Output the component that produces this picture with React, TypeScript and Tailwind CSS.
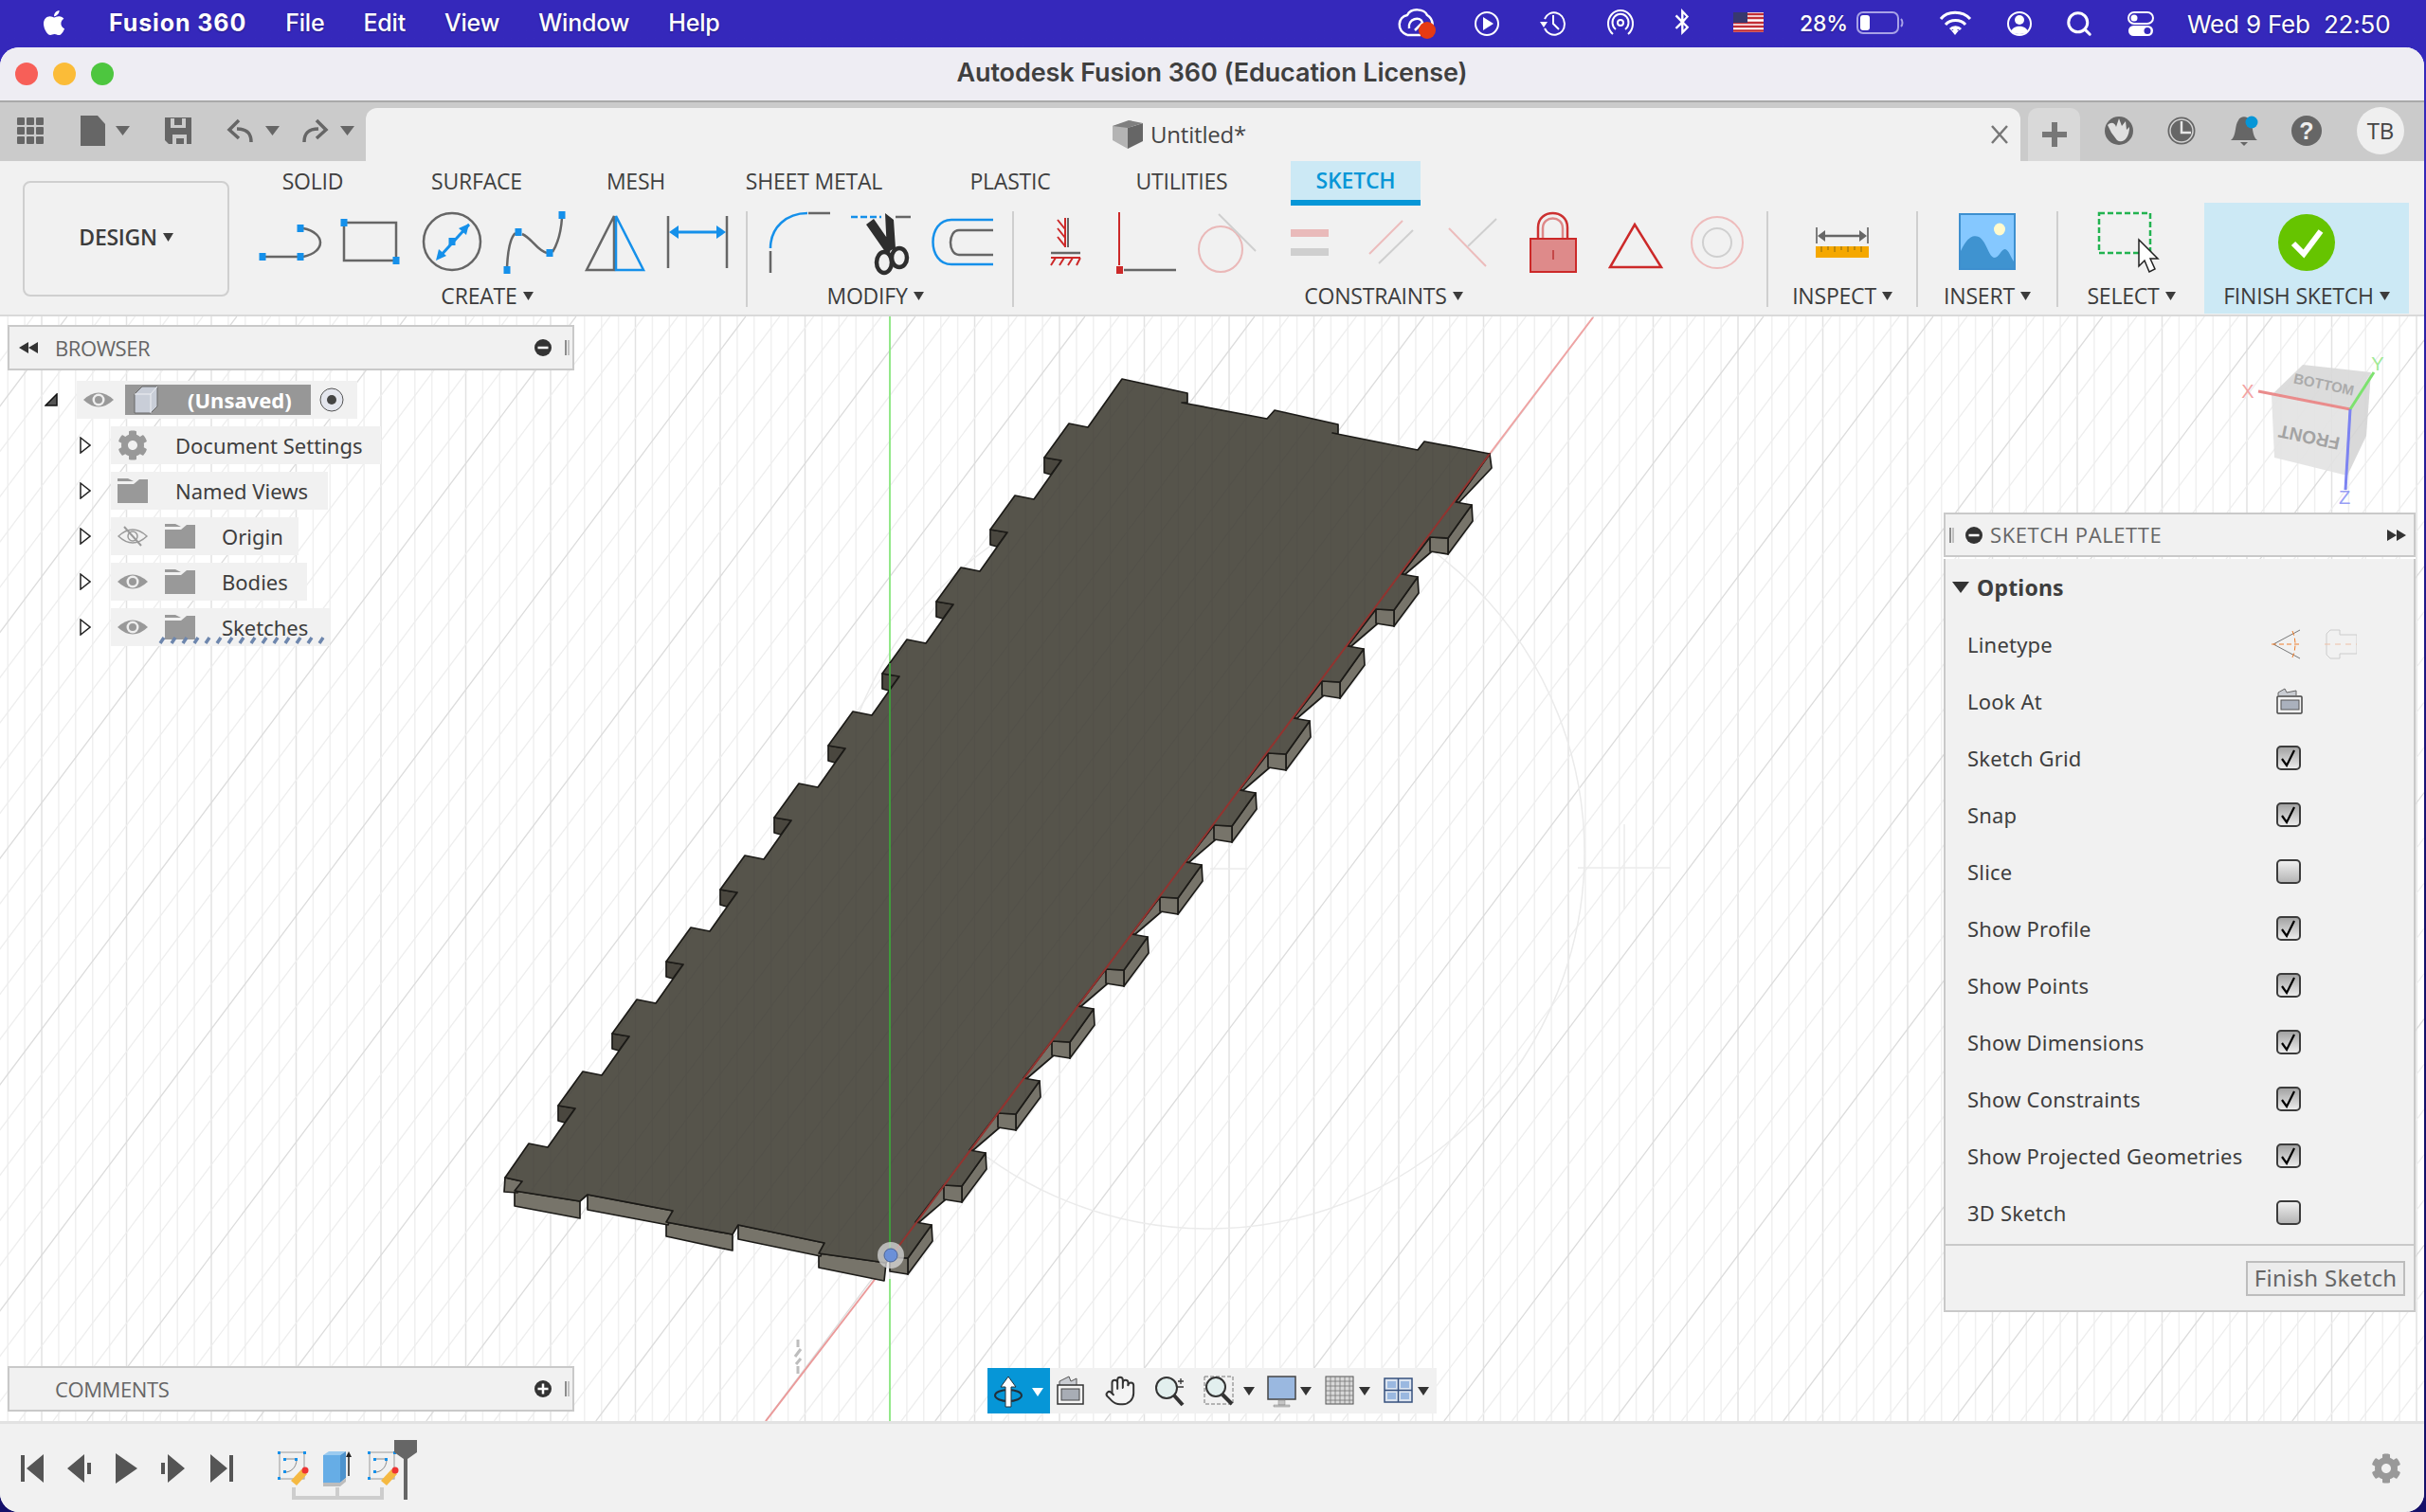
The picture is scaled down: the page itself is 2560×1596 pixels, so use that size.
import { FaApple, FaBluetoothB, FaCog } from "react-icons/fa";
import { Hand, Search } from "lucide-react";
import type { ReactNode } from "react";

type Pt = [number, number];
const pts = (a: Pt[]) => a.map((p) => p.join(",")).join(" ");
const add = (p: Pt, x: number, y: number): Pt => [p[0] + x, p[1] + y];
const range = (n: number) => Array.from({ length: n }, (_, i) => i);

// plate geometry, page coordinates
const T = (k: number): Pt => [558 + 57 * k, 1207 - 76 * k];
const R = (k: number): Pt => [1536 - 57 * k, 530 + 76 * k];

const topFace: Pt[] = [
  [533, 1243],
  ...range(10).flatMap((k) => [T(k), add(T(k), 20, 4), add(T(k), 49, -37), add(T(k), 31, -40)]),
  T(10),
  add(T(10), 20, 4),
  [1184, 400], [1253, 415], [1253, 425], [1247, 425], [1337, 442], [1345, 433], [1412, 448], [1412, 458], [1406, 457], [1496, 475], [1503, 466], [1572, 479],
  ...range(11).flatMap((k) => [R(k), add(R(k), 17, 3), add(R(k), -8, 38), add(R(k), -27, 37)]),
  [935, 1333], [864, 1323], [870, 1312], [779, 1293], [773, 1303], [703, 1290], [710, 1278], [620, 1261], [612, 1268], [543, 1257], [551, 1247],
];

const sideFaces: Pt[][] = [
  [[864, 1323], [935, 1333], [933, 1352], [864, 1338]],
  [[870, 1312], [779, 1293], [779, 1308], [866, 1326]],
  [[773, 1303], [703, 1290], [703, 1305], [773, 1320]],
  [[710, 1278], [620, 1261], [620, 1277], [705, 1293]],
  [[612, 1268], [543, 1257], [543, 1273], [612, 1286]],
  [[533, 1243], [551, 1247], [546, 1259], [532, 1258]],
  [[1572, 479], [1574, 494], [1540, 530], [1536, 530]],
  ...range(10).map((k): Pt[] => {
    const s = add(R(k), -27, 37);
    return [s, add(s, 2, 15), add(R(k + 1), 4, 0), R(k + 1)];
  }),
  ...range(11).flatMap((k): Pt[][] => [
    [add(R(k), 17, 3), add(R(k), 18, 20), add(R(k), -8, 55), add(R(k), -8, 38)],
    [add(R(k), -27, 37), add(R(k), -8, 38), add(R(k), -8, 55), add(R(k), -27, 52)],
  ]),
];

const notchFaces: Pt[][] = range(10).map((k) => [add(T(k), 31, -40), add(T(k), 49, -37), add(T(k), 38, -22), add(T(k), 31, -24)]);

const verticals = range(146).map((i) => 939 + 17.9 * (i - 52));
const isMajorV = (i: number) => (i - 52 + 500) % 5 === 0;
const diagonals = range(110).map((i) => i - 55);
const diagLine = (d: number) => {
  const off = d * 35.8;
  return { x1: 939 + (1325 - 334) / 1.334 + off, y1: 334, x2: 939 + (1325 - 1500) / 1.334 + off, y2: 1500 };
};

function Viewport() {
  return (
    <svg className="absolute inset-0 w-full h-full" viewBox="0 334 2558 1166" fill="none">
      <defs>
        <clipPath id="plate">
          <polygon points={pts(topFace)} />
        </clipPath>
      </defs>
      {verticals.map((x, i) => (
        <line key={i} x1={x} x2={x} y1={334} y2={1500} stroke={isMajorV(i) ? "#e2e2e2" : "#f0f0f0"} strokeWidth="1.5" />
      ))}
      {diagonals.map((d) => (
        <line key={d} {...diagLine(d)} stroke={d % 5 === 0 ? "#dcdcdc" : "#eeeeee"} strokeWidth="1.3" />
      ))}
      <circle cx="1275" cy="900" r="397" stroke="#ebebeb" strokeWidth="1.5" />
      <path d="M1277 917H1317M1665 916H1763M1714 870V960" stroke="#ebebeb" strokeWidth="1.5" />

      <line x1="939" x2="939" y1="334" y2="710" stroke="#93e88a" strokeWidth="2" />
      <line x1="939" x2="939" y1="1350" y2="1500" stroke="#93e88a" strokeWidth="2" />
      <line x1="1681" y1="335" x2="1572" y2="479" stroke="#f0a3a3" strokeWidth="2" />
      <line x1="935" y1="1335" x2="808" y2="1500" stroke="#eb9a9a" strokeWidth="2" />

      <g stroke="#1c1b18" strokeWidth="1.7" strokeLinejoin="round">
        {sideFaces.map((f, i) => (
          <polygon key={i} points={pts(f)} fill="#77746a" />
        ))}
        {notchFaces.map((f, i) => (
          <polygon key={i} points={pts(f)} fill="#4a473f" />
        ))}
        <polygon points={pts(topFace)} fill="#57544c" />
      </g>
      <g clipPath="url(#plate)" opacity="0.035">
        {verticals.map((x, i) => (
          <line key={i} x1={x} x2={x} y1={334} y2={1500} stroke="#000" strokeWidth="1.2" />
        ))}
        {diagonals.map((d) => (
          <line key={d} {...diagLine(d)} stroke="#000" strokeWidth="1.2" />
        ))}
      </g>
      <line x1="939" x2="939" y1="700" y2="1325" stroke="#3f9a3c" strokeWidth="2" />
      <line x1="1572" y1="479" x2="945" y2="1320" stroke="#93332f" strokeWidth="2" />
      <circle cx="940" cy="1325" r="14" fill="#d9d9d9" opacity="0.75" />
      <circle cx="940" cy="1325" r="7" fill="#6b90d8" stroke="#4a6398" />
      <path d="M842 1414v8M845 1424l-6 8M845 1434l-5 6M842 1442v8" stroke="#bdbdbd" strokeWidth="3" />

      <g opacity="0.9">
        <polygon points="2397,417 2430,385 2502,393 2480,432" fill="#d9d9d9" />
        <polygon points="2397,417 2480,432 2477,502 2400,483" fill="#e3e3e3" />
        <polygon points="2480,432 2502,393 2497,460 2477,502" fill="#d5d5d5" />
        <text x="2437" y="460" transform="rotate(192 2437 460)" textAnchor="middle" dominantBaseline="middle" fontFamily="Liberation Sans, sans-serif" fontSize="19" fontWeight="700" fill="#9a9a9a">FRONT</text>
        <text x="2452" y="407" transform="rotate(12 2452 407)" textAnchor="middle" dominantBaseline="middle" fontFamily="Liberation Sans, sans-serif" fontSize="15" fontWeight="700" fill="#a3a3a3">BOTTOM</text>
        <line x1="2383" y1="413" x2="2480" y2="432" stroke="#e88080" strokeWidth="3" />
        <line x1="2480" y1="432" x2="2505" y2="393" stroke="#70df60" strokeWidth="3" />
        <line x1="2480" y1="432" x2="2475" y2="517" stroke="#7077f0" strokeWidth="3" />
        <text x="2372" y="420" textAnchor="middle" fontFamily="Liberation Sans, sans-serif" fontSize="20" fill="#f29a9a">X</text>
        <text x="2509" y="391" textAnchor="middle" fontFamily="Liberation Sans, sans-serif" fontSize="20" fill="#96e88a">Y</text>
        <text x="2474" y="532" textAnchor="middle" fontFamily="Liberation Sans, sans-serif" fontSize="20" fill="#8f96f5">Z</text>
      </g>
    </svg>
  );
}

function Caret() {
  return (
    <svg width="11" height="9" viewBox="0 0 11 9" className="inline-block ml-[6px]">
      <path d="M0 0H11L5.5 9Z" fill="#3c3c3c" />
    </svg>
  );
}

function Group({ className, viewBox, width, label, pad, children }: { className: string; viewBox: string; width: number; label: string; pad?: string; children: ReactNode }) {
  return (
    <div className={`shrink-0 flex flex-col ${className}`}>
      <svg width={width} height={81} viewBox={viewBox} fill="none" className="block">
        {children}
      </svg>
      <div className={`h-[36px] flex items-center justify-center text-[23px] tracking-[-0.2px] text-[#3c3c3c] pb-[2px] ${pad ?? ""}`}>
        {label}
        <Caret />
      </div>
    </div>
  );
}

const Sep = () => <div className="w-[2px] h-[101px] mt-[9px] bg-[#cfcfcf] shrink-0" />;

const Sq = ({ x, y, c = "#1590ea" }: { x: number; y: number; c?: string }) => <rect x={x - 3.5} y={y - 4} width="7" height="8" fill={c} />;

function Ribbon() {
  const tabs = [
    ["SOLID", "w-[104px]"],
    ["SURFACE", "w-[242px]"],
    ["MESH", "w-[94px]"],
    ["SHEET METAL", "w-[282px]"],
    ["PLASTIC", "w-[132px]"],
    ["UTILITIES", "w-[230px]"],
  ];
  return (
    <div className="h-[164px] bg-[#f1f1f1] border-b-2 border-[#d9d9d9] flex shrink-0 font-['Open_Sans',sans-serif]">
      <div className="w-[218px] h-[122px] ml-[24px] mt-[21px] pb-[3px] shrink-0 rounded-[8px] border-2 border-[#cfcfcf] flex items-center justify-center text-[23px] font-semibold text-[#3c3c3c] tracking-[-0.3px]">
        DESIGN
        <Caret />
      </div>
      <div className="ml-[8px] flex flex-col">
        <div className="h-[44px] flex pl-[28px]">
          {tabs.map(([t, w]) => (
            <div key={t} className={`${w} h-[44px] pb-[2px] flex items-center justify-center text-[23px] tracking-[-0.2px] text-[#404040]`}>
              {t}
            </div>
          ))}
          <div className="w-[137px] h-[47px] bg-[#cce9f5] border-b-[6px] border-[#0696d7] flex items-center justify-center text-[23px] font-semibold tracking-[-0.2px] text-[#0696d7]">
            SKETCH
          </div>
        </div>
        <div className="flex h-[117px]">
          <Group className="w-[537px]" width={537} viewBox="250 214 537 81" label="CREATE" pad="pr-[9px]">
            <g stroke="#666" strokeWidth="2.5">
              <path d="M280 271H314" />
              <path d="M320 241C344 246 344 266 320 271" />
              <rect x="363" y="235" width="55" height="40" />
              <circle cx="477" cy="255" r="30" />
              <path d="M535 282C536 262 539 250 544 246M551 247C562 252 566 264 577 267M583 266C588 258 592 245 593 230" />
              <path d="M648 228L619 285H648Z" />
              <path d="M705 228V283M767 228V283" />
            </g>
            <Sq x={277} y={271} />
            <Sq x={317} y={271} />
            <Sq x={317} y={241} />
            <Sq x={363} y={235} />
            <Sq x={418} y={275} />
            <path d="M463 272L495 237" stroke="#1590ea" strokeWidth="3" />
            <path d="M495 236L484 241L492 248ZM460 275L471 270L463 263Z" fill="#1590ea" />
            <Sq x={477} y={255} />
            <Sq x={535} y={285} />
            <Sq x={547} y={245} />
            <Sq x={580} y={267} />
            <Sq x={593} y={227} />
            <path d="M650 228V285H679Z" stroke="#1590ea" strokeWidth="2.5" />
            <path d="M709 245H763" stroke="#1590ea" strokeWidth="3" />
            <path d="M706 245L716 238V252ZM766 245L756 238V252Z" fill="#1590ea" />
          </Group>
          <Sep />
          <Group className="w-[279px]" width={279} viewBox="789 214 279 81" label="MODIFY" pad="pr-[10px]">
            <path d="M813 262C813 240 830 225 852 225" stroke="#1590ea" strokeWidth="2.5" />
            <path d="M813 265V288M853 225H876M945 229H961" stroke="#666" strokeWidth="2.5" />
            <path d="M898 229H930" stroke="#1590ea" strokeWidth="2.5" strokeDasharray="7 3" />
            <path d="M914 237L922 231L942 260L937 270ZM934 225L943 232L945 262L936 266Z" fill="#2e2e2e" />
            <ellipse cx="933" cy="277" rx="8" ry="11" stroke="#2e2e2e" strokeWidth="4.5" />
            <ellipse cx="949" cy="272" rx="8" ry="10" stroke="#2e2e2e" strokeWidth="4.5" />
            <path d="M1048 232H1004C978 232 978 279 1004 279H1048" stroke="#1590ea" strokeWidth="2.5" />
            <path d="M1048 243H1012C1000 243 1000 269 1012 269H1048" stroke="#666" strokeWidth="2.5" />
          </Group>
          <Sep />
          <Group className="w-[794px]" width={794} viewBox="1070 214 794 81" label="CONSTRAINTS" pad="pr-[14px]">
            <path d="M1124 230V261M1116 232L1124 242M1116 241L1124 251M1116 250L1124 260" stroke="#cc2929" strokeWidth="2" />
            <path d="M1127 230V261" stroke="#666" strokeWidth="2" />
            <path d="M1109 267H1140" stroke="#666" strokeWidth="2.5" />
            <path d="M1109 272H1140M1114 272L1109 280M1123 272L1118 280M1132 272L1127 280M1140 272L1136 280" stroke="#cc2929" strokeWidth="2" />
            <path d="M1181 224V280" stroke="#cc2929" strokeWidth="2" />
            <rect x="1178" y="281" width="7" height="8" fill="#cc2929" />
            <path d="M1186 285H1241" stroke="#666" strokeWidth="2.5" />
            <ellipse cx="1288" cy="263" rx="23" ry="24" stroke="#eab8b8" strokeWidth="2" />
            <path d="M1286 226L1325 265" stroke="#cfcfcf" strokeWidth="2" />
            <rect x="1362" y="242" width="40" height="8" fill="#e9baba" />
            <rect x="1362" y="262" width="40" height="8" fill="#cfcfcf" />
            <path d="M1480 233L1445 268" stroke="#ecbcbc" strokeWidth="2" />
            <path d="M1491 243L1455 278" stroke="#cfcfcf" strokeWidth="2" />
            <path d="M1529 241L1568 281" stroke="#ecbcbc" strokeWidth="2" />
            <path d="M1579 231L1549 260" stroke="#cfcfcf" strokeWidth="2" />
            <path d="M1623 252V240C1623 220 1654 220 1654 240V252" stroke="#cc3030" strokeWidth="2.5" />
            <path d="M1628 252V241C1628 227 1649 227 1649 241V252" stroke="#de8888" strokeWidth="2.5" />
            <rect x="1615" y="252" width="48" height="35" fill="#de8a8a" stroke="#cc2929" strokeWidth="2" />
            <path d="M1639 264V274" stroke="#b33" strokeWidth="1.5" />
            <path d="M1725 237L1753 282H1699Z" stroke="#cc2929" strokeWidth="2.5" />
            <circle cx="1812" cy="256" r="27" stroke="#eebcbc" strokeWidth="2" />
            <circle cx="1812" cy="256" r="15" stroke="#cfcfcf" strokeWidth="2" />
          </Group>
          <Sep />
          <Group className="w-[156px]" width={156} viewBox="1866 214 156 81" label="INSPECT">
            <path d="M1917 240V257M1971 240V257" stroke="#555" strokeWidth="1.5" />
            <path d="M1922 249H1966" stroke="#666" strokeWidth="2.5" />
            <path d="M1918 249L1926 243V255ZM1970 249L1962 243V255Z" fill="#666" />
            <rect x="1916" y="260" width="56" height="12" fill="#f5a800" />
            <path d="M1922 260V266M1929 260V264M1936 260V266M1943 260V264M1950 260V266M1957 260V264M1964 260V266" stroke="#8a6a10" strokeWidth="1" />
          </Group>
          <Sep />
          <Group className="w-[146px]" width={146} viewBox="2024 214 146 81" label="INSERT">
            <rect x="2068" y="226" width="58" height="58" fill="#85c8ff" stroke="#3d8fcf" strokeWidth="2" />
            <path d="M2069 265C2076 250 2082 248 2088 250C2096 254 2098 270 2104 272C2110 272 2112 262 2116 263C2120 264 2122 272 2125 276V283H2069Z" fill="#3f93d0" />
            <ellipse cx="2110" cy="242" rx="6" ry="6.5" fill="#fffacd" />
          </Group>
          <Sep />
          <Group className="w-[154px]" width={154} viewBox="2172 214 154 81" label="SELECT">
            <rect x="2215" y="225" width="54" height="42" stroke="#22b350" strokeWidth="2.5" strokeDasharray="6 3" />
            <path d="M2257 253V281L2263 275L2268 287L2274 284L2269 273H2277Z" fill="#fff" stroke="#222" strokeWidth="1.5" />
          </Group>
          <div className="w-[216px] shrink-0 bg-[#cce9f5] flex flex-col">
            <svg width={216} height={81} viewBox="2326 214 216 81" fill="none" className="block">
              <circle cx="2434" cy="256" r="30" fill="#66c400" />
              <path d="M2420 257L2431 268L2449 244" stroke="#fff" strokeWidth="6" />
            </svg>
            <div className="h-[36px] pb-[2px] flex items-center justify-center text-[23px] tracking-[-0.2px] text-[#3c3c3c]">
              FINISH SKETCH
              <Caret />
            </div>
          </div>
        </div>
      </div>
    </div>
  );
}

const Eye = ({ off }: { off?: boolean }) => (
  <svg width="32" height="24" viewBox="0 0 32 24" fill="none" className="shrink-0">
    {off ? (
      <>
        <path d="M1 12Q16 -2 31 12Q16 26 1 12Z" stroke="#9a9a9a" strokeWidth="1.5" />
        <circle cx="16" cy="12" r="5" stroke="#9a9a9a" strokeWidth="1.5" />
        <path d="M7 2L25 22" stroke="#9a9a9a" strokeWidth="2" />
      </>
    ) : (
      <>
        <path d="M0 12Q16 -3 32 12Q16 27 0 12Z" fill="#999" />
        <circle cx="16" cy="12" r="6.5" fill="#eee" />
        <circle cx="16" cy="12" r="4" fill="#999" />
      </>
    )}
  </svg>
);

const Folder = () => (
  <svg width="32" height="26" viewBox="0 0 32 26" className="shrink-0">
    <path d="M0 0H11L17 3H0Z" fill="#999" />
    <path d="M0 6H17L23 1H32V26H0Z" fill="#999" />
  </svg>
);

const Arrow = () => (
  <svg width="12" height="18" viewBox="0 0 12 18" fill="none" className="shrink-0">
    <path d="M1 1L11 9L1 17Z" fill="#fff" stroke="#222" strokeWidth="1.5" />
  </svg>
);

const RoundBtn = ({ plus }: { plus?: boolean }) => (
  <svg width="18" height="18" viewBox="0 0 18 18" className="shrink-0">
    <circle cx="9" cy="9" r="9" fill="#333" />
    <path d={plus ? "M3.5 9H14.5M9 3.5V14.5" : "M3.5 9H14.5"} stroke="#fff" strokeWidth="2.5" />
  </svg>
);

const Grip = () => <div className="w-[5px] h-[16px] border-x-2 border-[#8c8c8c] border-r-[#c0c0c0] shrink-0" />;

function Row({ width, eye, off, gear, label, wavy }: { width: string; eye?: boolean; off?: boolean; gear?: boolean; label: string; wavy?: boolean }) {
  return (
    <div className="flex items-center h-[40px] mb-[8px]">
      <div className="w-[109px] flex justify-end pr-[21px] shrink-0">
        <Arrow />
      </div>
      <div className={`relative h-[40px] bg-[#f1f1f1] flex items-center pl-[7px] text-[#3e3e3e] ${width}`}>
        {gear ? <FaCog size={32} color="#999" className="shrink-0" /> : eye ? <Eye off={off} /> : <Folder />}
        {eye && (
          <div className="ml-[18px]">
            <Folder />
          </div>
        )}
        <span className={eye ? "ml-[28px]" : "ml-[29px]"}>{label}</span>
        {wavy && (
          <svg width="176" height="8" viewBox="0 0 176 8" className="absolute left-[50px] bottom-[2px]">
            <path d="M2 7L6 1M14 7L18 1M26 7L30 1M38 7L42 1M50 7L54 1M62 7L66 1M74 7L78 1M86 7L90 1M98 7L102 1M110 7L114 1M122 7L126 1M134 7L138 1M146 7L150 1M158 7L162 1M170 7L174 1" stroke="#6d86ad" strokeWidth="3.5" />
          </svg>
        )}
      </div>
    </div>
  );
}

function Browser() {
  return (
    <div className="absolute left-[8px] top-[9px] w-[598px] font-['Noto_Sans',sans-serif] text-[22px]">
      <div className="h-[48px] bg-[#f1f1f1] border-2 border-[#c9c9c9] flex items-center pl-[10px] pr-[3px] text-[#666] font-['Open_Sans',sans-serif]">
        <svg width="20" height="12" viewBox="0 0 20 12" className="shrink-0">
          <path d="M10 0V12L0 6ZM20 0V12L10 6Z" fill="#333" />
        </svg>
        <span className="ml-[18px] flex-1 tracking-[-0.4px]">BROWSER</span>
        <RoundBtn />
        <div className="ml-[14px]">
          <Grip />
        </div>
      </div>
      <div className="flex items-center h-[40px] mt-[11px] mb-[8px]">
        <div className="w-[73px] flex justify-end pr-[20px] shrink-0">
          <svg width="14" height="14" viewBox="0 0 14 14">
            <path d="M13 1V13H1Z" fill="#555" stroke="#111" strokeWidth="1.5" />
          </svg>
        </div>
        <div className="w-[296px] h-[40px] bg-[#f1f1f1] flex items-center pl-[7px]">
          <Eye />
          <div className="ml-[12px] w-[196px] h-[32px] bg-[#979797] flex items-center pl-[9px]">
            <svg width="26" height="30" viewBox="0 0 26 30" className="shrink-0">
              <path d="M1 9L9 1H25V22L18 29H1Z" fill="#c9ced8" stroke="#666" />
              <path d="M1 9H18V29M18 9L25 1" fill="none" stroke="#eef0f4" />
            </svg>
            <span className="ml-[31px] font-bold text-white">(Unsaved)</span>
          </div>
          <svg width="26" height="26" viewBox="0 0 26 26" className="ml-[9px] shrink-0">
            <circle cx="13" cy="13" r="12" fill="#e4e6ee" stroke="#555" />
            <circle cx="13" cy="13" r="5" fill="#444" />
          </svg>
        </div>
      </div>
      <Row width="w-[285px]" gear label="Document Settings" />
      <Row width="w-[229px]" label="Named Views" />
      <Row width="w-[198px]" eye off label="Origin" />
      <Row width="w-[207px]" eye label="Bodies" />
      <Row width="w-[231px]" eye label="Sketches" wavy />
    </div>
  );
}

function Check({ on }: { on?: boolean }) {
  return on ? (
    <div className="w-[26px] h-[26px] rounded-[5px] border-2 border-[#3c3c3c] bg-linear-to-b from-[#a3a3a3] to-[#ececec] flex items-center justify-center">
      <svg width="18" height="20" viewBox="0 0 18 20" fill="none">
        <path d="M2 11L7 18L15 2" stroke="#000" strokeWidth="2.2" />
      </svg>
    </div>
  ) : (
    <div className="w-[26px] h-[26px] rounded-[5px] border-2 border-[#3c3c3c] bg-linear-to-b from-[#f0f0f0] to-[#b5b5b5]" />
  );
}

const LookAt = () => (
  <svg width="30" height="28" viewBox="0 0 30 28" fill="none">
    <path d="M3 8V5L10 1L12 5L22 3V8" fill="#c9ccd2" stroke="#666" />
    <rect x="2" y="9" width="26" height="18" rx="1" fill="#f4f4f4" stroke="#444" strokeWidth="1.5" />
    <rect x="6" y="13" width="19" height="10" fill="#aab1bd" stroke="#555" />
  </svg>
);

function Palette() {
  const rows: [string, boolean][] = [
    ["Sketch Grid", true],
    ["Snap", true],
    ["Slice", false],
    ["Show Profile", true],
    ["Show Points", true],
    ["Show Dimensions", true],
    ["Show Constraints", true],
    ["Show Projected Geometries", true],
    ["3D Sketch", false],
  ];
  return (
    <div className="absolute right-[9px] top-[207px] w-[498px] font-['Noto_Sans',sans-serif] text-[22px] tracking-[0.2px] text-[#3e3e3e]">
      <div className="h-[47px] bg-[#f1f1f1] border-2 border-[#c9c9c9] flex items-center pl-[4px] pr-[8px] text-[#666] font-['Open_Sans',sans-serif]">
        <Grip />
        <div className="ml-[12px]">
          <RoundBtn />
        </div>
        <span className="ml-[8px] flex-1 tracking-[0.6px]">SKETCH PALETTE</span>
        <svg width="20" height="12" viewBox="0 0 20 12">
          <path d="M0 0V12L10 6ZM10 0V12L20 6Z" fill="#333" />
        </svg>
      </div>
      <div className="mt-[2px] bg-[#f1f1f1] border-x-2 border-[#c9c9c9] pb-[3px]">
        <div className="h-[60px] flex items-center pl-[7px]">
          <svg width="18" height="12" viewBox="0 0 18 12">
            <path d="M0 0H18L9 12Z" fill="#333" />
          </svg>
          <span className="ml-[8px] font-bold text-[23px]">Options</span>
        </div>
        <div className="h-[60px] flex items-center pl-[23px]">
          <span className="w-[321px] shrink-0">Linetype</span>
          <svg width="90" height="34" viewBox="0 0 90 34" fill="none">
            <path d="M30 2L2 17L30 32" stroke="#777" />
            <path d="M0 17H30M22 3C26 12 26 22 22 31" stroke="#ef7d2a" strokeDasharray="5 3" />
            <path d="M62 2H72V7H90V27H72V32H62L58 28V6Z" stroke="#ccc" />
            <path d="M56 17H90" stroke="#eebfa6" strokeDasharray="6 5" />
          </svg>
        </div>
        <div className="h-[60px] flex items-center pl-[23px]">
          <span className="w-[325px] shrink-0">Look At</span>
          <LookAt />
        </div>
        {rows.map(([label, on]) => (
          <div key={label} className="h-[60px] flex items-center pl-[23px]">
            <span className="w-[326px] shrink-0">{label}</span>
            <Check on={on} />
          </div>
        ))}
      </div>
      <div className="h-[72px] bg-[#f1f1f1] border-2 border-[#c9c9c9] flex items-center justify-end pr-[9px]">
        <div className="w-[168px] h-[37px] bg-[#ececec] border-2 border-[#bdbdbd] flex items-center justify-center text-[#666] text-[24px] tracking-[0.3px]">
          Finish Sketch
        </div>
      </div>
    </div>
  );
}

function Comments() {
  return (
    <div className="absolute left-[8px] bottom-[10px] w-[598px] h-[48px] bg-[#f1f1f1] border-2 border-[#c9c9c9] flex items-center pl-[48px] pr-[3px] text-[22px] text-[#666] font-['Open_Sans',sans-serif]">
      <span className="flex-1 tracking-[-0.4px]">COMMENTS</span>
      <RoundBtn plus />
      <div className="ml-[14px]">
        <Grip />
      </div>
    </div>
  );
}

function NavBar() {
  const tri = (x: number) => `M${x - 6} 1464H${x + 6}L${x} 1473Z`;
  return (
    <div className="absolute left-[1042px] top-[1110px] h-[48px] flex bg-[#f1f1f1]">
      <svg width="66" height="48" viewBox="1042 1444 66 48" fill="none" className="bg-[#0696d7]">
        <ellipse cx="1064" cy="1473" rx="14" ry="6" stroke="#22303a" strokeWidth="2" />
        <path d="M1064 1453L1072 1464H1067V1485H1061V1464H1056Z" fill="#fff" stroke="#22303a" strokeWidth="1" />
        <path d="M1089 1465H1101L1095 1474Z" fill="#fff" />
      </svg>
      <svg width="408" height="48" viewBox="1108 1444 408 48" fill="none">
        <path d="M1118 1462V1458L1128 1453L1130 1458L1136 1455V1462" fill="#c9ccd2" stroke="#555" />
        <rect x="1116" y="1462" width="27" height="20" fill="#f6f6f6" stroke="#333" strokeWidth="1.5" />
        <rect x="1120" y="1466" width="19" height="12" fill="#a8adb5" stroke="#444" />
        <Hand x={1165} y={1451} width={34} height={34} stroke="#333" strokeWidth={1.4} fill="#f4f4f4" />
        <circle cx="1231" cy="1465" r="11" fill="#e2efee" stroke="#333" strokeWidth="2" />
        <path d="M1239 1473L1248 1483" stroke="#333" strokeWidth="4" />
        <path d="M1243 1458H1249M1246 1455V1461M1243 1464H1249" stroke="#333" strokeWidth="1.3" />
        <rect x="1271" y="1453" width="30" height="29" stroke="#777" strokeDasharray="4 2" />
        <circle cx="1283" cy="1464" r="10" fill="#e2efee" stroke="#333" strokeWidth="2" />
        <path d="M1290 1472L1300 1482" stroke="#333" strokeWidth="4" />
        <path d={tri(1318)} fill="#333" />
        <rect x="1338" y="1453" width="29" height="24" fill="#9ab8e0" stroke="#444" strokeWidth="1.5" />
        <path d="M1349 1478H1356V1483H1349ZM1344 1483H1361V1485H1344Z" fill="#c4c4c4" stroke="#888" strokeWidth="0.5" />
        <path d={tri(1378)} fill="#333" />
        <rect x="1399" y="1453" width="29" height="29" fill="#d8d8d8" stroke="#555" />
        <path d="M1404 1453V1482M1409 1453V1482M1414 1453V1482M1419 1453V1482M1424 1453V1482M1399 1458H1428M1399 1463H1428M1399 1468H1428M1399 1473H1428M1399 1478H1428" stroke="#777" strokeWidth="0.8" />
        <path d={tri(1440)} fill="#333" />
        <rect x="1461" y="1455" width="29" height="25" fill="#dbe4f0" stroke="#36507e" strokeWidth="1.5" />
        <path d="M1475.5 1455V1480M1461 1467.5H1490" stroke="#36507e" strokeWidth="1.5" />
        <rect x="1464" y="1458" width="9" height="7" fill="#9ab8e0" />
        <rect x="1478" y="1458" width="9" height="7" fill="#9ab8e0" />
        <rect x="1464" y="1470" width="9" height="7" fill="#9ab8e0" />
        <rect x="1478" y="1470" width="9" height="7" fill="#9ab8e0" />
        <path d={tri(1502)} fill="#333" />
      </svg>
    </div>
  );
}

function SketchGlyph({ x }: { x: number }) {
  return (
    <g fill="none">
      <rect x={x - 13} y={1533} width="26" height="28" stroke="#aaa" strokeWidth="1.2" />
      <path d={`M${x - 7} ${1540}H${x + 5}M${x + 5} 1540C${x + 5} 1550 ${x - 2} 1554 ${x - 7} 1554`} stroke="#888" />
      <g fill="#1590ea">
        <rect x={x - 15} y={1532} width="3" height="3" />
        <rect x={x + 12} y={1532} width="3" height="3" />
        <rect x={x - 15} y={1559} width="3" height="3" />
        <rect x={x - 9} y={1539} width="3" height="3" />
        <rect x={x + 3} y={1539} width="3" height="3" />
        <rect x={x - 9} y={1552} width="3" height="3" />
      </g>
      <path d={`M${x + 10} ${1551}L${x + 16} ${1556}L${x + 5} ${1568}L${x - 1} ${1563}Z`} fill="#f5b942" />
      <circle cx={x + 14} cy={1552} r="3.5" fill="#ee3333" />
    </g>
  );
}

function Timeline() {
  return (
    <div className="h-[96px] bg-[#f1f1f1] border-t-[3px] border-[#e2e2e2] flex items-start justify-between shrink-0 pr-[24px]">
      <svg width="460" height="93" viewBox="0 1503 460 93" fill="none">
        <g fill="#555">
          <path d="M22 1536H26V1564H22ZM46 1535V1565L28 1550Z" />
          <path d="M89 1535V1565L71 1550ZM92 1544H96V1556H92Z" />
          <path d="M122 1534L145 1550L122 1566Z" />
          <path d="M170 1544H174V1556H170ZM177 1535L195 1550L177 1565Z" />
          <path d="M222 1535L240 1550L222 1565ZM242 1536H246V1564H242Z" />
        </g>
        <SketchGlyph x={308} />
        <path d="M341 1536L347 1532H365L359 1536Z" fill="#9bcbf0" />
        <rect x="341" y="1536" width="18" height="29" fill="#66ade6" />
        <path d="M359 1536L365 1532V1560L359 1565Z" fill="#4d93cd" />
        <path d="M341 1565H359L365 1560V1564L359 1569H341Z" fill="#bdbdbd" />
        <path d="M368 1558V1535" stroke="#222" strokeWidth="1.5" />
        <path d="M368 1532L371 1538H365Z" fill="#222" />
        <SketchGlyph x={403} />
        <path d="M310 1570V1583M356 1570V1581M403 1570V1583M310 1581H405" stroke="#cdcdcd" strokeWidth="4" />
        <path d="M416 1520H440V1533L430 1540H426L416 1533Z" fill="#666" />
        <path d="M428 1538V1583" stroke="#666" strokeWidth="4" />
      </svg>
      <div className="mt-[31px]">
        <FaCog size={32} color="#999" />
      </div>
    </div>
  );
}

function TopBar() {
  const item = "[text-shadow:0_1px_2px_rgba(0,0,0,0.35)]";
  return (
    <div className={`h-[50px] shrink-0 flex items-center text-white text-[25px] font-['Inter',sans-serif] font-medium tracking-[-0.2px] ${item}`}>
      <FaApple size={30} className="ml-[42px] mr-[43px] -mt-[3px]" />
      <div className="flex gap-[41px]">
        <span className="font-bold tracking-[0.9px]">Fusion 360</span>
        <span>File</span>
        <span>Edit</span>
        <span>View</span>
        <span>Window</span>
        <span>Help</span>
      </div>
      <div className="ml-auto flex items-center">
        <svg width="400" height="50" viewBox="1470 0 400 50" fill="none">
          <path d="M1486 37C1474 32 1476 18 1486 16C1490 8 1504 9 1507 16C1514 20 1514 30 1510 34M1486 37H1500M1488 30C1486 20 1500 16 1502 24L1494 32" stroke="#fff" strokeWidth="2.5" />
          <circle cx="1507" cy="32" r="9" fill="#e63a12" />
          <circle cx="1570" cy="25" r="12" stroke="#fff" strokeWidth="2" />
          <path d="M1566 18L1577 25L1566 32Z" fill="#fff" />
          <path d="M1631 20C1636 9 1651 12 1652 25C1652 38 1636 41 1631 30" stroke="#fff" strokeWidth="2" />
          <path d="M1640 16V25L1646 31" stroke="#fff" strokeWidth="2" />
          <path d="M1626 23L1634 23L1630 29Z" fill="#fff" />
          <g stroke="#fff" strokeWidth="2">
            <path d="M1703 36A13 14 0 1 1 1719 36M1706 31A8.5 9 0 1 1 1716 31" />
            <circle cx="1711" cy="24" r="3" />
          </g>
          <FaBluetoothB x={1762} y={9} size={28} color="#fff" />
          <rect x="1830" y="13" width="32" height="21" fill="#fff" />
          <path d="M1830 15H1862M1830 19H1862M1830 24H1862M1830 28H1862M1830 32.500H1862" stroke="#c22e35" strokeWidth="2.3" />
          <rect x="1830" y="13" width="15" height="11" fill="#38386e" />
        </svg>
        <span className="ml-[30px] w-[52px] text-[23px]">28%</span>
        <svg width="340" height="50" viewBox="1950 0 340 50" fill="none">
          <rect x="1959" y="13" width="43" height="22" rx="6" stroke="#a8a2e6" strokeWidth="2" />
          <rect x="1962" y="16" width="10" height="16" rx="3" fill="#fff" />
          <path d="M2005 20C2007 22 2007 26 2005 28" stroke="#a8a2e6" strokeWidth="2" />
          <path d="M2047 20C2054 11 2070 11 2078 20M2052 26C2057 20 2068 20 2073 26M2057 31C2060 28 2065 28 2068 31" stroke="#fff" strokeWidth="3" />
          <path d="M2062 34L2066 30H2059ZM2058 32L2062 37L2066 32Z" fill="#fff" />
          <circle cx="2130" cy="25" r="12" stroke="#fff" strokeWidth="2" />
          <circle cx="2130" cy="21" r="5" fill="#fff" />
          <path d="M2121 33C2124 26 2136 26 2139 33C2135 37 2125 37 2121 33Z" fill="#fff" />
          <Search x={2178} y={10} width={30} height={30} stroke="#fff" strokeWidth={2.4} />
          <rect x="2245" y="13" width="26" height="12" rx="6" stroke="#fff" strokeWidth="2" />
          <circle cx="2251" cy="19" r="3.5" fill="#fff" />
          <rect x="2245" y="27" width="26" height="11" rx="5.5" fill="#fff" />
          <circle cx="2265" cy="32.500" r="3.5" fill="#3528bb" />
        </svg>
        <span className="ml-[17px] w-[252px] text-[26px] font-normal whitespace-pre">Wed 9 Feb  22:50</span>
      </div>
    </div>
  );
}

function TabBar() {
  return (
    <div className="h-[62px] bg-[#cbcbcb] flex shrink-0">
      <svg width="386" height="62" viewBox="0 108 386 62" fill="none" className="shrink-0">
        <g fill="#666">
          {[18, 28, 38].flatMap((x) =>
            [124, 134, 144].map((y) => <rect key={`${x}-${y}`} x={x} y={y} width="8" height="8" rx="1" />)
          )}
          <path d="M85 122H103L111 131V154H85Z" />
          <path d="M122 133H137L129.500 143Z" />
          <path d="M174 124H202V152H178L174 148ZM180 125V135H196V125H192V132H184V125ZM182 142V152H186V146H194V152H197V142Z" fillRule="evenodd" />
          <path d="M280 133H295L287.500 143Z" />
          <path d="M359 133H374L366.500 143Z" />
        </g>
        <path d="M265 150C265 142 262 136 250 136" stroke="#666" strokeWidth="3.5" />
        <path d="M252 127L242 137L252 146" stroke="#666" strokeWidth="3.5" />
        <path d="M321 150C321 142 324 136 336 136" stroke="#666" strokeWidth="3.5" />
        <path d="M334 127L344 137L334 146" stroke="#666" strokeWidth="3.5" />
      </svg>
      <div className="w-[1746px] mt-[6px] rounded-t-[12px] bg-[#f1f1f1] flex items-center pl-[788px] pr-[12px] shrink-0">
        <svg width="32" height="30" viewBox="0 0 32 30" className="shrink-0">
          <path d="M0 6L20 0V24L16 30L0 21Z" fill="#b4b4b4" />
          <path d="M16 8L32 3V22L16 30Z" fill="#666" />
          <path d="M0 6L17 0L32 3L16 8Z" fill="#7f7f7f" />
        </svg>
        <span className="ml-[8px] text-[24px] tracking-[-0.2px] text-[#444] font-['Open_Sans',sans-serif]">Untitled*</span>
        <svg width="20" height="20" viewBox="0 0 20 20" fill="none" className="ml-auto">
          <path d="M2 1L18 19M18 1L2 19" stroke="#777" strokeWidth="2.5" />
        </svg>
      </div>
      <div className="w-[55px] ml-[8px] mt-[6px] rounded-t-[10px] bg-[#d9d9d9] flex items-center justify-center shrink-0">
        <svg width="26" height="26" viewBox="0 0 26 26">
          <path d="M10 0H16V10H26V16H16V26H10V16H0V10H10Z" fill="#777" />
        </svg>
      </div>
      <svg width="292" height="62" viewBox="2195 108 292 62" fill="none" className="shrink-0">
        <circle cx="2236" cy="138" r="15" fill="#666" />
        <path d="M2228 140L2224 132C2228 128 2232 130 2233 134L2236 125L2239 133L2243 128L2244 137L2247 134C2247 146 2240 152 2234 148Z" fill="#e0e0e0" />
        <circle cx="2302" cy="138" r="14.500" fill="#666" />
        <circle cx="2302" cy="138" r="12" fill="#666" stroke="#d5d5d5" strokeWidth="1.500" />
        <path d="M2302 128V140H2312" stroke="#e6e6e6" strokeWidth="2.500" />
        <path d="M2354 148C2360 144 2358 132 2362 127C2364 122 2372 122 2374 127C2378 132 2376 144 2382 148Z" fill="#666" />
        <path d="M2364 150H2372L2368 154Z" fill="#666" />
        <circle cx="2376" cy="129" r="6.500" fill="#0696d7" />
        <circle cx="2434" cy="138" r="16" fill="#666" />
        <text x="2434" y="147" textAnchor="middle" fontFamily="Liberation Sans, sans-serif" fontWeight="700" fontSize="25" fill="#eee">?</text>
      </svg>
      <div className="w-[50px] h-[50px] mt-[5px] rounded-full bg-[#efefef] flex items-center justify-center text-[24px] text-[#444] font-['Open_Sans',sans-serif] shrink-0">
        TB
      </div>
    </div>
  );
}

export default function App() {
  return (
    <div className="w-[2560px] h-[1596px] overflow-hidden flex flex-col bg-linear-to-b from-[#3528bb] from-[10%] to-[#15106a] to-[60%]">
      <TopBar />
      <div className="w-[2558px] flex-1 min-h-0 rounded-[20px] overflow-hidden flex flex-col bg-white">
        <div className="h-[58px] bg-[#eeedf3] border-b-2 border-[#a9a9a9] flex items-center shrink-0">
          <div className="w-[130px] pl-[16px] flex gap-[16px] shrink-0">
            <span className="w-[24px] h-[24px] rounded-full bg-[#f75f58]" />
            <span className="w-[24px] h-[24px] rounded-full bg-[#fbbc38]" />
            <span className="w-[24px] h-[24px] rounded-full bg-[#4dc63f]" />
          </div>
          <div className="flex-1 text-center text-[27px] -mt-[2px] font-semibold text-[#3f3f3f] font-['Inter',sans-serif] tracking-[-0.1px]">
            Autodesk Fusion 360 (Education License)
          </div>
          <div className="w-[130px] shrink-0" />
        </div>
        <TabBar />
        <Ribbon />
        <div className="relative flex-1 min-h-0 bg-white overflow-hidden">
          <Viewport />
          <Browser />
          <Palette />
          <Comments />
          <NavBar />
        </div>
        <Timeline />
      </div>
    </div>
  );
}
